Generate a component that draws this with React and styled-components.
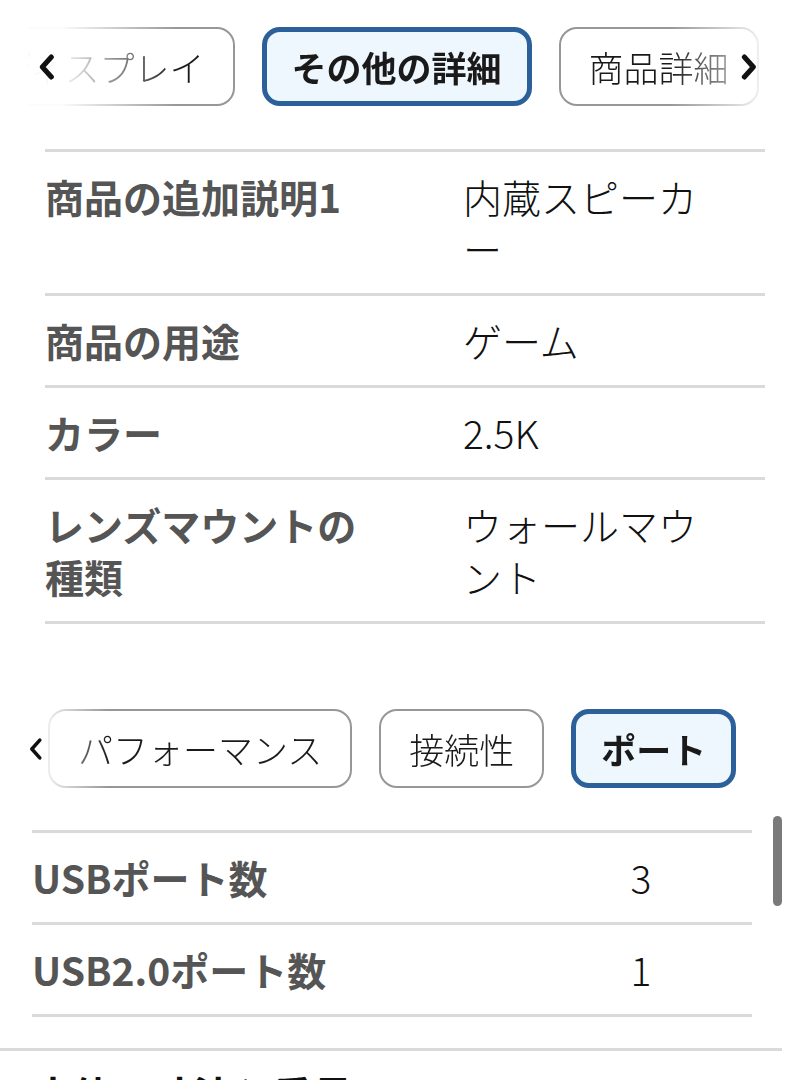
import { useLayoutEffect, useRef } from "react";
import styled, { createGlobalStyle } from "styled-components";

const FONT = `"Noto Sans CJK JP", "Noto Sans", sans-serif`;
const LINE = "#dadada";

const GlobalStyle = createGlobalStyle`
  body {
    margin: 0;
    background: #fff;
    font-family: ${FONT};
    color: #111;
  }
`;

const Page = styled.div`
  width: 810px;
  padding-top: 27px;
  overflow: hidden;
`;

const TopBlock = styled.section`
  margin: 0 45px;
`;

const StripWrap = styled.div`
  position: relative;
  margin-left: ${(p) => p.$left}px;
  margin-right: ${(p) => p.$right}px;
`;

const Scroller = styled.div`
  position: relative;
  display: flex;
  gap: 27px;
  padding: 0 2px;
  overflow-x: auto;
  scrollbar-width: none;
  mask-image: linear-gradient(
    90deg,
    rgba(0, 0, 0, ${(p) => p.$edgeL}) 0,
    rgba(0, 0, 0, ${(p) => p.$edgeL}) ${(p) => p.$holdL}px,
    #000 ${(p) => p.$fadeL}px,
    #000 calc(100% - ${(p) => p.$fadeR}px),
    rgba(0, 0, 0, ${(p) => (p.$fadeR ? 0.1 : 1)}) 100%
  );
  &::-webkit-scrollbar {
    display: none;
  }
`;

const Tab = styled.button`
  flex: none;
  box-sizing: border-box;
  height: 79px;
  padding: 0 ${(p) => (p.$active ? 25 : 28)}px;
  border: ${(p) => (p.$active ? "5px solid #2c609b" : "2px solid #979797")};
  border-radius: 18px;
  background: ${(p) => (p.$active ? "#eef7fd" : "#fff")};
  font-family: ${FONT};
  font-size: 35px;
  font-weight: ${(p) => (p.$active ? 700 : 300)};
  line-height: 1;
  color: #1a1a1a;
  white-space: nowrap;
`;

const Chevron = styled.span`
  position: absolute;
  top: 50%;
  transform: translateY(-50%);
  display: flex;
  pointer-events: none;
  ${(p) => (p.$right !== undefined ? `right: ${p.$right}px;` : `left: ${p.$left}px;`)}
`;

const SpecTable = styled.div`
  margin-top: ${(p) => p.$top}px;
  width: 720px;
  border-bottom: 3px solid ${LINE};
`;

const SpecRow = styled.div`
  display: grid;
  grid-template-columns: ${(p) => p.$cols};
  padding: 18px 0 19px;
  border-top: 3px solid ${LINE};
  font-size: 39px;
  line-height: 52px;
`;

const Label = styled.div`
  padding-right: ${(p) => p.$gap}px;
  font-weight: 700;
  color: #555;
`;

const Value = styled.div`
  padding-right: ${(p) => p.$pad}px;
  text-align: ${(p) => p.$align};
  font-weight: 300;
  color: #111;
`;

const BottomPanel = styled.section`
  position: relative;
  box-sizing: border-box;
  width: 782px;
  margin-top: 85px;
  padding: 0 0 31px 32px;
  border-bottom: 3px solid ${LINE};
`;

const ScrollThumb = styled.div`
  position: absolute;
  top: 107px;
  right: 0;
  width: 9px;
  height: 90px;
  border-radius: 5px;
  background: #7a7a7a;
`;

const Heading = styled.h2`
  margin: 17px 0 0 33px;
  font-size: 40px;
  font-weight: 700;
  line-height: 52px;
  color: #111;
`;

const ChevronIcon = ({ dir, size = 26, stroke = 5 }) => (
  <svg width={size * 0.68} height={size} viewBox="0 0 17 26" fill="none">
    <polyline
      points={dir === "left" ? "13,3 4,13 13,23" : "4,3 13,13 4,23"}
      stroke="#111"
      strokeWidth={stroke}
      strokeLinecap="round"
      strokeLinejoin="round"
    />
  </svg>
);

const TabStrip = ({ tabs, active, align, left, right, fade, chevrons }) => {
  const scrollerRef = useRef(null);
  const activeRef = useRef(null);

  useLayoutEffect(() => {
    if (align === undefined) return;
    scrollerRef.current.scrollLeft = activeRef.current.offsetLeft - align;
  }, [align]);

  return (
    <StripWrap $left={left} $right={right}>
      <Scroller
        ref={scrollerRef}
        $edgeL={fade.edge}
        $holdL={fade.hold}
        $fadeL={fade.left}
        $fadeR={fade.right}
      >
        {tabs.map((t) => (
          <Tab key={t} $active={t === active} ref={t === active ? activeRef : null}>
            {t}
          </Tab>
        ))}
      </Scroller>
      {chevrons.left !== undefined && (
        <Chevron $left={chevrons.left}>
          <ChevronIcon dir="left" size={chevrons.size} stroke={chevrons.stroke} />
        </Chevron>
      )}
      {chevrons.right !== undefined && (
        <Chevron $right={chevrons.right}>
          <ChevronIcon dir="right" size={chevrons.size} stroke={chevrons.stroke} />
        </Chevron>
      )}
    </StripWrap>
  );
};

const details = [
  ["商品の追加説明1", "内蔵スピーカー"],
  ["商品の用途", "ゲーム"],
  ["カラー", "2.5K"],
  ["レンズマウントの種類", "ウォールマウント"],
];

const ports = [
  ["USBポート数", "3"],
  ["USB2.0ポート数", "1"],
];

const App = () => {
  return (
    <Page>
      <GlobalStyle />
      <TopBlock>
        <TabStrip
          tabs={["ディスプレイ", "その他の詳細", "商品詳細", "寸法"]}
          active="その他の詳細"
          align={235}
          left={-18}
          right={0}
          fade={{ edge: 0.03, hold: 34, left: 150, right: 95 }}
          chevrons={{ left: 11, right: 7, size: 26, stroke: 5 }}
        />
        <SpecTable $top={43}>
          {details.map(([k, v]) => (
            <SpecRow key={k} $cols="418px 1fr">
              <Label $gap={70}>{k}</Label>
              <Value $pad={40} $align="left">
                {v}
              </Value>
            </SpecRow>
          ))}
        </SpecTable>
      </TopBlock>

      <BottomPanel>
        <TabStrip
          tabs={["パフォーマンス", "接続性", "ポート"]}
          active="ポート"
          left={14}
          right={36}
          fade={{ edge: 0.15, hold: 0, left: 62, right: 0 }}
          chevrons={{ left: -18, size: 23, stroke: 4 }}
        />
        <SpecTable $top={42}>
          {ports.map(([k, v]) => (
            <SpecRow key={k} $cols="1fr 222px">
              <Label $gap={0}>{k}</Label>
              <Value $pad={0} $align="center">
                {v}
              </Value>
            </SpecRow>
          ))}
        </SpecTable>
        <ScrollThumb />
      </BottomPanel>

      <Heading>本体の寸法と重量</Heading>
    </Page>
  );
};

export default App;
